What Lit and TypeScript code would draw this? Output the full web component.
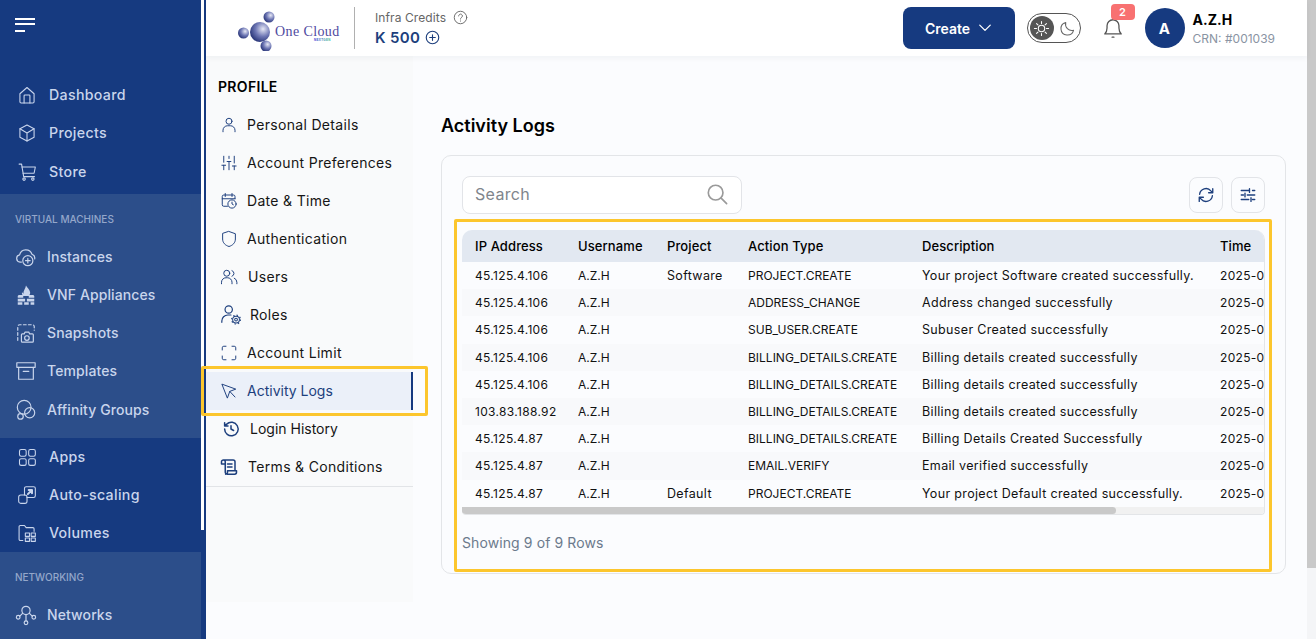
import { LitElement, html, css, svg } from "lit";
import { customElement } from "lit/decorators.js";

const icons: Record<string, unknown> = {
  home: svg`<path d="M3.500 10.500 12 3l8.500 7.500V20a1.500 1.500 0 0 1-1.500 1.500H5A1.500 1.500 0 0 1 3.500 20z"/><path d="M8.500 21.500V13a1 1 0 0 1 1-1h5a1 1 0 0 1 1 1v8.500"/>`,
  box: svg`<path d="M12 2.500 20.500 7v10L12 21.500 3.500 17V7z"/><path d="M3.500 7 12 12l8.500-5M12 12v9.500"/>`,
  cart: svg`<path d="M2.500 2.500h3l2.500 15h13"/><path d="M6 6h16l-1.500 7.500H7.300"/><circle cx="8.500" cy="20.500" r="1.500"/><circle cx="19" cy="20.500" r="1.500"/>`,
  cloud: svg`<path d="M7 17.500H5.500a4 4 0 0 1-.5-7.900 7 7 0 0 1 13.500-.6 4.500 4.500 0 0 1 3 5"/><circle cx="14" cy="16" r="5.500"/><path d="M14 13.500v5M11.500 16h5"/>`,
  firewall: svg`<path fill="currentColor" stroke="none" d="M12 1.500c1 2.500 4 4 4.500 7.500.2 1.800-.5 3-1.500 4H9c-1.200-1-1.800-2.500-1.300-4.200.3 1 .9 1.500 1.500 1.700C8.800 7.500 11.500 5 12 1.500zM4 12h5v3H3v-2zm11 0h5l1 1v2h-6zM3 16h8v3H3zm10 0h8v3h-8zM3 20h5v2.500H3zm7 0h5v2.500h-5zm7 0h4v2.500h-4z"/>`,
  snapshot: svg`<path stroke-dasharray="3 2.500" d="M3 20V5a2 2 0 0 1 2-2h14a2 2 0 0 1 2 2v4"/><path d="M8 22a1 1 0 0 1-1-1v-7a1 1 0 0 1 1-1h2l1-2h4l1 2h3a1 1 0 0 1 1 1v7a1 1 0 0 1-1 1z"/><circle cx="13" cy="17.500" r="2.500"/>`,
  archive: svg`<rect x="2" y="3" width="20" height="5"/><path d="M4 8v13h16V8M9 12.500h6"/>`,
  affinity: svg`<circle cx="10" cy="9" r="7.500"/><circle cx="16" cy="15" r="5.500"/><circle cx="6" cy="19" r="3"/>`,
  apps: svg`<rect x="3" y="3" width="8" height="8" rx="2"/><rect x="14" y="3" width="8" height="8" rx="2"/><rect x="3" y="14" width="8" height="8" rx="2"/><rect x="14" y="14" width="8" height="8" rx="2"/>`,
  scale: svg`<path d="M9 12V4a2 2 0 0 1 2-2h9a2 2 0 0 1 2 2v9a2 2 0 0 1-2 2h-8"/><rect x="2" y="12" width="10" height="10" rx="2.500"/><path stroke-width="2.400" d="M13 11l5-5M14 6h4v4"/>`,
  volumes: svg`<path d="M7 21H4a1.500 1.500 0 0 1-1.500-1.500v-15A1.500 1.500 0 0 1 4 3h5l2 2.500h8A1.500 1.500 0 0 1 20.500 7v3"/><rect x="10" y="12" width="5" height="4"/><rect x="17" y="12" width="5" height="4"/><rect x="10" y="18" width="5" height="4"/><rect x="17" y="18" width="5" height="4"/>`,
  network: svg`<circle cx="12" cy="7" r="4.500"/><circle cx="3.500" cy="14.500" r="2"/><circle cx="20.500" cy="14.500" r="2"/><circle cx="12" cy="20.500" r="2"/><path d="M12 11.500v7M8.500 10 5 13.500M15.500 10l3.500 3.500"/>`,
  user: svg`<circle cx="12" cy="7" r="4"/><path d="M4 21v-2a6 6 0 0 1 6-6h4a6 6 0 0 1 6 6v2"/>`,
  sliders: svg`<path d="M5 3v8M5 15v6M12 3v3M12 10v11M19 3v9M19 16v5M2.500 15h5M9.500 10h5M16.500 16h5"/>`,
  calendar: svg`<path d="M10 19H5a2 2 0 0 1-2-2V6a2 2 0 0 1 2-2h13a2 2 0 0 1 2 2v3M3 9h17M7 2v4M16 2v4"/><circle cx="16" cy="16" r="5.500"/><path d="M16 13.500V16l1.800 1"/>`,
  shield: svg`<path d="M12 2 20.500 5v7c0 5-3.500 8.500-8.500 10-5-1.500-8.500-5-8.500-10V5z"/>`,
  users: svg`<circle cx="9" cy="7" r="4"/><path d="M2 21v-2a6 6 0 0 1 6-6h2a6 6 0 0 1 6 6v2M16 3.500a4 4 0 0 1 0 7.500M19 13.500a6 6 0 0 1 3.500 5.500v2"/>`,
  roles: svg`<circle cx="9.500" cy="6" r="4"/><path d="M2 20v-1.500A6.500 6.500 0 0 1 8.500 12H12"/><circle cx="17.500" cy="17" r="1.500" stroke-width="1.100"/><circle cx="17.500" cy="17" r="3.700" stroke-width="1.100"/><circle cx="17.500" cy="17" r="4.800" stroke-width="1.300" stroke-linecap="butt" stroke-dasharray="1.500 2.270"/>`,
  limit: svg`<path d="M3 8V5a2 2 0 0 1 2-2h3M16 3h3a2 2 0 0 1 2 2v3M21 16v3a2 2 0 0 1-2 2h-3M8 21H5a2 2 0 0 1-2-2v-3"/>`,
  cursor: svg`<path d="M3 3l18 6.500-8 3-3 8.500z"/><path d="M13 12.500l7 7.500"/>`,
  history: svg`<path stroke-width="2" d="M3.500 12a9 9 0 1 0 2.800-6.500L3.500 8M3.500 3.500V8H8M12 7.500V12l3.500 2"/>`,
  terms: svg`<path stroke-width="2" d="M7 19V5a2.500 2.500 0 0 0-2.500-2.500h13A2.500 2.500 0 0 1 20 5v12M4.500 2.500A2.500 2.500 0 0 0 2 5v3h5M10 8h6M10 12h6M7 19a2.500 2.500 0 0 0 2.500 2.500h10A2.500 2.500 0 0 0 22 19v-2H10v2a2.500 2.500 0 0 1-2.500 2.500"/>`,
};

function icon(name: string) {
  return html`<svg class="ico" viewBox="0 0 24 24" fill="none" stroke="currentColor" stroke-width="1.300" stroke-linecap="round" stroke-linejoin="round">${icons[name]}</svg>`;
}

const topNav = [
  ["home", "Dashboard"],
  ["box", "Projects"],
  ["cart", "Store"],
];
const vmNav = [
  ["cloud", "Instances"],
  ["firewall", "VNF Appliances"],
  ["snapshot", "Snapshots"],
  ["archive", "Templates"],
  ["affinity", "Affinity Groups"],
];
const midNav = [
  ["apps", "Apps"],
  ["scale", "Auto-scaling"],
  ["volumes", "Volumes"],
];

const profileMenu = [
  { icon: "user", label: "Personal Details" },
  { icon: "sliders", label: "Account Preferences" },
  { icon: "calendar", label: "Date & Time" },
  { icon: "shield", label: "Authentication" },
  { icon: "users", label: "Users", cls: "mid" },
  { icon: "roles", label: "Roles", cls: "roles" },
  { icon: "limit", label: "Account Limit" },
  { icon: "cursor", label: "Activity Logs", cls: "active" },
  { icon: "history", label: "Login History", cls: "wide" },
  { icon: "terms", label: "Terms & Conditions", cls: "mid" },
];

const rows = [
  ["45.125.4.106", "Software", "PROJECT.CREATE", "Your project Software created successfully."],
  ["45.125.4.106", "", "ADDRESS_CHANGE", "Address changed successfully"],
  ["45.125.4.106", "", "SUB_USER.CREATE", "Subuser Created successfully"],
  ["45.125.4.106", "", "BILLING_DETAILS.CREATE", "Billing details created successfully"],
  ["45.125.4.106", "", "BILLING_DETAILS.CREATE", "Billing details created successfully"],
  ["103.83.188.92", "", "BILLING_DETAILS.CREATE", "Billing details created successfully"],
  ["45.125.4.87", "", "BILLING_DETAILS.CREATE", "Billing Details Created Successfully"],
  ["45.125.4.87", "", "EMAIL.VERIFY", "Email verified successfully"],
  ["45.125.4.87", "Default", "PROJECT.CREATE", "Your project Default created successfully."],
];

@customElement("app-root")
export class AppRoot extends LitElement {
  static styles = css`
    :host {
      display: block;
      height: 100vh;
      overflow: hidden;
      background: #fbfcfe;
      font-family: Inter, "Liberation Sans", sans-serif;
      letter-spacing: 0.02em;
      color: #111;
    }
    .shell {
      display: flex;
      height: 639px;
    }
    .ico {
      flex: none;
      width: 20px;
      height: 20px;
    }

    /* left rail */
    .rail {
      flex: none;
      display: flex;
      box-sizing: border-box;
      width: 206px;
      height: 639px;
      overflow: hidden;
      border-right: 2px solid #163a80;
      background: #163a80;
      color: #c9d5ec;
    }
    .rail-nav {
      flex: none;
      width: 201px;
    }
    .rail-thumb {
      flex: none;
      width: 3px;
      height: 530px;
      background: #fff;
    }
    .burger {
      display: flex;
      flex-direction: column;
      height: 76px;
      box-sizing: border-box;
      padding: 18px 0 0 15px;
    }
    .burger i {
      display: block;
      width: 20px;
      height: 2px;
      margin-bottom: 3px;
      background: #fff;
    }
    .burger i:last-child {
      width: 10px;
      margin-top: 2px;
    }
    .group {
      padding-left: 17px;
    }
    .group.tint {
      background: #2c4e8a;
      padding-left: 15px;
    }
    .group.vm {
      height: 244px;
    }
    .group.net {
      height: 87px;
    }
    .group.first {
      height: 118px;
    }
    .group.first .nav-item:last-child,
    .group.vm .nav-item:last-child {
      margin-top: 1px;
    }
    .section-label {
      height: 44px;
      box-sizing: border-box;
      padding-top: 16px;
      font-size: 10px;
      line-height: 18px;
      font-weight: 500;
      letter-spacing: 0;
      color: #94a7ca;
    }
    .nav-item {
      display: flex;
      align-items: center;
      gap: 12px;
      height: 38px;
      font-size: 14.200px;
      font-weight: 500;
    }
    .nav-item span {
      margin-bottom: 2px;
    }
    .tint .nav-item {
      gap: 10px;
      font-size: 14px;
      letter-spacing: 0.100px;
    }
    .tint .nav-item .ico {
      width: 22px;
      height: 22px;
    }

    /* right part */
    .page {
      flex: 1;
      min-width: 0;
      display: flex;
      flex-direction: column;
    }
    .page-bar {
      flex: none;
      width: 9px;
      background: #f4f5f7;
    }
    .page-bar div {
      height: 568px;
      background: #c9c9c9;
    }
    .topbar {
      flex: none;
      display: flex;
      align-items: center;
      height: 56px;
      background: #fff;
      box-shadow: 0 2px 6px rgba(20, 30, 50, 0.05);
      padding: 0 32px;
      position: relative;
    }
    .logo {
      flex: none;
      width: 102px;
      height: 46px;
    }
    .divider {
      width: 1px;
      height: 42px;
      background: #b0b0b0;
      margin: 0 20px 0 14px;
    }
    .credits {
      display: flex;
      flex-direction: column;
      gap: 3px;
    }
    .credits-label {
      display: flex;
      align-items: center;
      gap: 7px;
      font-size: 12px;
      letter-spacing: 0.100px;
      color: #666;
    }
    .credits-label svg {
      width: 15px;
      height: 15px;
    }
    .credits-value {
      display: flex;
      align-items: center;
      gap: 5px;
      font-size: 15px;
      font-weight: 600;
      color: #1d3f7d;
    }
    .credits-value svg {
      width: 15px;
      height: 15px;
    }
    .top-right {
      margin-left: auto;
      display: flex;
      align-items: center;
    }
    .create {
      display: flex;
      align-items: center;
      justify-content: center;
      gap: 8px;
      width: 112px;
      height: 42px;
      border: 0;
      border-radius: 8px;
      background: #163a80;
      color: #fff;
      font: inherit;
      font-size: 14px;
      font-weight: 600;
    }
    .create svg {
      width: 14px;
      height: 14px;
    }
    .toggle {
      display: flex;
      align-items: center;
      justify-content: space-between;
      box-sizing: border-box;
      width: 54px;
      height: 30px;
      margin-left: 12px;
      padding: 0 4px 0 2px;
      border: 1px solid #555;
      border-radius: 15px;
    }
    .knob {
      display: flex;
      align-items: center;
      justify-content: center;
      width: 24px;
      height: 24px;
      border-radius: 50%;
      background: #555;
      color: #fff;
    }
    .toggle svg {
      width: 17px;
      height: 17px;
    }
    .bell {
      position: relative;
      width: 22px;
      height: 22px;
      margin: 0 21px;
      color: #555;
    }
    .bell svg {
      width: 22px;
      height: 22px;
    }
    .badge {
      position: absolute;
      top: -13px;
      left: 9px;
      width: 24px;
      height: 16px;
      border-radius: 4px;
      background: #f87171;
      color: #fff;
      font-size: 11px;
      font-weight: 600;
      line-height: 16px;
      text-align: center;
    }
    .avatar {
      display: flex;
      align-items: center;
      justify-content: center;
      width: 40px;
      height: 40px;
      border-radius: 50%;
      background: #163a80;
      color: #fff;
      font-size: 15px;
      font-weight: 700;
    }
    .who {
      margin-left: 8px;
      display: flex;
      flex-direction: column;
      gap: 2px;
    }
    .who b {
      font-size: 14px;
      line-height: 19px;
      font-weight: 700;
      letter-spacing: 0;
      color: #000;
    }
    .who span {
      font-size: 12px;
      line-height: 15px;
      letter-spacing: 0;
      color: #8a94a3;
    }
    .body {
      flex: 1;
      display: flex;
      align-items: flex-start;
    }

    /* profile menu */
    .side {
      flex: none;
      width: 207px;
      height: 546px;
      background: #f9fafb;
    }
    .side h4 {
      margin: 0;
      padding: 22px 0 0 12px;
      height: 50px;
      box-sizing: border-box;
      font-size: 14px;
      line-height: 18px;
      font-weight: 600;
      color: #000;
    }
    .menu {
      border-bottom: 1px solid #e2e4e7;
    }
    .menu-item {
      position: relative;
      display: flex;
      align-items: center;
      gap: 9px;
      height: 38px;
      padding-left: 14px;
      font-size: 14px;
      color: #151515;
    }
    .menu-item span {
      margin-bottom: 2px;
    }
    .menu-item .ico {
      color: #1d3f7d;
      width: 18px;
      height: 18px;
    }
    .menu-item.mid {
      gap: 10px;
    }
    .menu-item.wide {
      gap: 10px;
      padding-left: 16px;
      letter-spacing: 0;
    }
    .menu-item.roles {
      gap: 8px;
    }
    .menu-item.roles .ico {
      width: 22px;
      height: 22px;
    }
    .menu-item.active {
      background: #ebf0f9;
      color: #1d3f7d;
      letter-spacing: 0;
      box-shadow: inset -2px 0 0 #163a80;
    }
    .mark {
      position: absolute;
      z-index: 5;
      border: 3px solid #fcc62d;
      border-radius: 2px;
      pointer-events: none;
    }
    .menu-item .mark {
      inset: -6px -15px -6px -5px;
    }

    /* activity logs */
    .content {
      flex: 1;
      min-width: 0;
      padding: 58px 21px 0 28px;
    }
    h1 {
      margin: 0 0 17px;
      font-size: 18px;
      line-height: 24px;
      font-weight: 600;
      letter-spacing: 0;
      color: #000;
    }
    .panel {
      box-sizing: border-box;
      height: 419px;
      padding: 20px;
      border: 1px solid #e3e5e8;
      border-radius: 10px;
    }
    .toolbar {
      display: flex;
      align-items: center;
      height: 38px;
      margin-bottom: 16px;
    }
    .search {
      display: flex;
      align-items: center;
      justify-content: space-between;
      box-sizing: border-box;
      width: 280px;
      height: 38px;
      padding: 0 13px 2px 12px;
      border: 1px solid #e2e4e8;
      border-radius: 8px;
      background: #fff;
      font-size: 16px;
      color: #80858c;
    }
    .search svg {
      width: 22px;
      height: 22px;
      color: #9a9a9a;
    }
    .tool {
      display: flex;
      align-items: center;
      justify-content: center;
      box-sizing: border-box;
      width: 34px;
      height: 36px;
      margin-left: 8px;
      border: 1px solid #e2e4e8;
      border-radius: 8px;
      color: #1d3f7d;
    }
    .tool svg {
      width: 18px;
      height: 18px;
    }
    .search + .tool {
      margin-left: auto;
    }
    .table-area {
      position: relative;
    }
    .table-area .mark {
      inset: -11px -7px -15px -8px;
    }
    .table-box {
      border-right: 1px solid #e3e5e8;
      border-bottom: 1px solid #e3e5e8;
      border-radius: 10px 10px 4px 4px;
      overflow: hidden;
    }
    .clip {
      overflow: hidden;
    }
    .hbar {
      height: 7px;
      background: #f1f1f1;
    }
    .hbar div {
      width: 654px;
      height: 7px;
      background: #c9c9c9;
      border-radius: 0 4px 4px 0;
    }
    table {
      width: 986px;
      table-layout: fixed;
      border-collapse: collapse;
      font-size: 12px;
    }
    col:nth-child(1) { width: 103px; }
    col:nth-child(2) { width: 89px; }
    col:nth-child(3) { width: 81px; }
    col:nth-child(4) { width: 174px; }
    col:nth-child(5) { width: 298px; }
    th {
      height: 32px;
      padding: 0 0 0 13px;
      background: #e2e8f1;
      font-size: 13px;
      font-weight: 500;
      letter-spacing: 0.100px;
      text-align: left;
      color: #000;
    }
    td {
      height: 27.200px;
      padding: 0 0 0 13px;
      white-space: nowrap;
      overflow: hidden;
      color: #111;
    }
    td:nth-child(2),
    td:nth-child(4) {
      letter-spacing: 0;
    }
    td:nth-child(3),
    td:nth-child(5) {
      font-size: 12.500px;
      letter-spacing: 0.340px;
    }
    tbody tr:nth-child(even) {
      background: #f8f9fb;
    }
    .count {
      padding-top: 18px;
      height: 24px;
      font-size: 14px;
      line-height: 20px;
      letter-spacing: 0.100px;
      color: #6b7a8c;
    }
  `;

  render() {
    return html`
      <div class="shell">
        <aside class="rail">
          <div class="rail-nav">
            <div class="burger"><i></i><i></i><i></i></div>
            <div class="group first">${this.navItems(topNav)}</div>
            <div class="group tint vm">
              <div class="section-label">VIRTUAL MACHINES</div>
              ${this.navItems(vmNav)}
            </div>
            <div class="group">${this.navItems(midNav)}</div>
            <div class="group tint net">
              <div class="section-label">NETWORKING</div>
              ${this.navItems([["network", "Networks"]])}
            </div>
          </div>
          <div class="rail-thumb"></div>
        </aside>

        <div class="page">
          <header class="topbar">
            ${this.logo()}
            <div class="divider"></div>
            <div class="credits">
              <div class="credits-label">
                Infra Credits
                <svg viewBox="0 0 24 24" fill="none" stroke="currentColor" stroke-width="1.500" stroke-linecap="round"><circle cx="12" cy="12" r="10"/><path d="M9 9.500a3 3 0 1 1 4.500 2.600c-1 .6-1.500 1.200-1.500 2.400M12 17.500v.3"/></svg>
              </div>
              <div class="credits-value">
                K 500
                <svg viewBox="0 0 24 24" fill="none" stroke="currentColor" stroke-width="1.800" stroke-linecap="round"><circle cx="12" cy="12" r="10"/><path d="M12 7.500v9M7.500 12h9"/></svg>
              </div>
            </div>
            <div class="top-right">
              <button class="create">
                Create
                <svg viewBox="0 0 24 24" fill="none" stroke="currentColor" stroke-width="2.200" stroke-linecap="round" stroke-linejoin="round"><path d="M3 7l9 9 9-9"/></svg>
              </button>
              <div class="toggle">
                <span class="knob">
                  <svg viewBox="0 0 24 24" fill="none" stroke="currentColor" stroke-width="1.500" stroke-linecap="round"><circle cx="12" cy="12" r="4.500"/><path d="M12 2v3M12 19v3M2 12h3M19 12h3M5 5l2 2M17 17l2 2M5 19l2-2M17 7l2-2"/></svg>
                </span>
                <svg viewBox="0 0 24 24" fill="none" stroke="#666" stroke-width="1.500" stroke-linejoin="round"><path d="M20.500 14.500A9 9 0 0 1 9.500 3.500a9 9 0 1 0 11 11z"/></svg>
              </div>
              <div class="bell">
                <svg viewBox="0 0 24 24" fill="none" stroke="currentColor" stroke-width="1.400" stroke-linecap="round" stroke-linejoin="round"><path d="M3 18.500c1.500-1.500 2.500-3 2.500-6.500V9.500a6.500 6.500 0 0 1 13 0V12c0 3.500 1 5 2.500 6.500z"/><path d="M11 22h2"/></svg>
                <span class="badge">2</span>
              </div>
              <div class="avatar">A</div>
              <div class="who"><b>A.Z.H</b><span>CRN: #001039</span></div>
            </div>
          </header>

          <div class="body">
            <nav class="side">
              <h4>PROFILE</h4>
              <div class="menu">
                ${profileMenu.map(
                  (m) => html`<div class="menu-item ${m.cls ?? ""}">
                    ${icon(m.icon)}<span>${m.label}</span>
                    ${m.cls === "active" ? html`<div class="mark"></div>` : ""}
                  </div>`
                )}
              </div>
            </nav>

            <main class="content">
              <h1>Activity Logs</h1>
              <section class="panel">
                <div class="toolbar">
                  <div class="search">
                    Search
                    <svg viewBox="0 0 24 24" fill="none" stroke="currentColor" stroke-width="1.800" stroke-linecap="round"><circle cx="10.500" cy="10.500" r="8"/><path d="M16.500 16.500 22.500 22.500"/></svg>
                  </div>
                  <div class="tool">
                    <svg viewBox="0 0 24 24" fill="none" stroke="currentColor" stroke-width="1.800" stroke-linecap="round" stroke-linejoin="round"><path d="M3.500 11a8.500 8.500 0 0 1 15-4.500L21 9M21 3.500V9h-5.500M20.500 13a8.500 8.500 0 0 1-15 4.500L3 15M3 20.500V15h5.500"/></svg>
                  </div>
                  <div class="tool">
                    <svg viewBox="0 0 24 24" fill="none" stroke="currentColor" stroke-width="1.800" stroke-linecap="round"><path d="M3 6h10M18 6h3M3 12h3M11 12h10M3 18h10M18 18h3M14 3.500v5M8 9.500v5M16 15.500v5"/></svg>
                  </div>
                </div>
                <div class="table-area">
                  <div class="mark"></div>
                  <div class="table-box">
                    <div class="clip">
                      <table>
                        <colgroup><col /><col /><col /><col /><col /><col /></colgroup>
                        <thead>
                          <tr>
                            <th>IP Address</th><th>Username</th><th>Project</th>
                            <th>Action Type</th><th>Description</th><th>Time</th>
                          </tr>
                        </thead>
                        <tbody>
                          ${rows.map(
                            (r) => html`<tr>
                              <td>${r[0]}</td><td>A.Z.H</td><td>${r[1]}</td>
                              <td>${r[2]}</td><td>${r[3]}</td><td>2025-0</td>
                            </tr>`
                          )}
                        </tbody>
                      </table>
                    </div>
                    <div class="hbar"><div></div></div>
                  </div>
                  <div class="count">Showing 9 of 9 Rows</div>
                </div>
              </section>
            </main>
          </div>
        </div>
        <div class="page-bar"><div></div></div>
      </div>
    `;
  }

  navItems(items: string[][]) {
    return items.map(
      ([ic, label]) => html`<div class="nav-item">${icon(ic)}<span>${label}</span></div>`
    );
  }

  logo() {
    return html`<svg class="logo" viewBox="0 0 102 46">
      <defs>
        <radialGradient id="orb" cx="65%" cy="35%" r="75%">
          <stop offset="0" stop-color="#e6e8f5" />
          <stop offset="0.5" stop-color="#6f78b5" />
          <stop offset="1" stop-color="#1d2a6e" />
        </radialGradient>
        <linearGradient id="tag" x1="0" x2="1">
          <stop offset="0" stop-color="#3b3bd6" />
          <stop offset="1" stop-color="#35c48d" />
        </linearGradient>
      </defs>
      <circle cx="22" cy="27" r="10" fill="url(#orb)" />
      <circle cx="31" cy="12" r="5.500" fill="url(#orb)" />
      <circle cx="5.500" cy="28" r="5.500" fill="url(#orb)" />
      <circle cx="28" cy="41" r="5.500" fill="url(#orb)" />
      <text x="37" y="31" font-family="Liberation Serif, serif" font-size="14" letter-spacing=".4" fill="#4f4aa0">One Cloud</text>
      <text x="76" y="36" font-family="Liberation Sans, sans-serif" font-size="3" font-weight="700" fill="url(#tag)">NEXTGEN</text>
    </svg>`;
  }
}
